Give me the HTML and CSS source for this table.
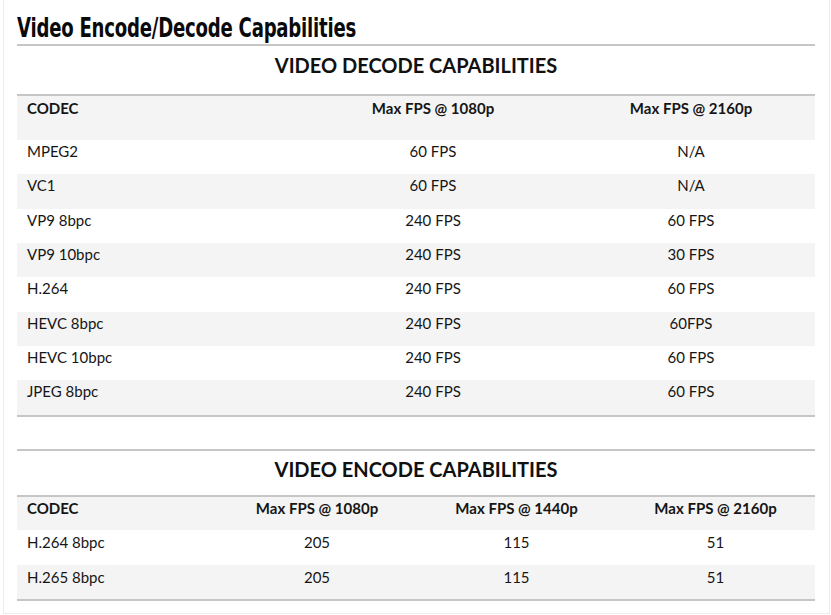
FILE: index.html
```html
<!DOCTYPE html>
<html>
<head>
<meta charset="utf-8">
<link rel="stylesheet" href="styles.css">
</head>
<body>
<div class="frame">
  <h1 class="title"><span class="title-text">Video Encode/Decode Capabilities</span></h1>
  <div class="rule"></div>

  <h2 class="heading heading-decode">VIDEO DECODE CAPABILITIES</h2>
  <table class="grid decode">
    <colgroup><col class="c1"><col class="c2"><col class="c3"></colgroup>
    <thead>
      <tr class="head"><th class="codec">CODEC</th><th>Max FPS @ 1080p</th><th>Max FPS @ 2160p</th></tr>
    </thead>
    <tbody>
      <tr><td class="codec">MPEG2</td><td>60 FPS</td><td>N/A</td></tr>
      <tr class="alt"><td class="codec">VC1</td><td>60 FPS</td><td>N/A</td></tr>
      <tr><td class="codec">VP9 8bpc</td><td>240 FPS</td><td>60 FPS</td></tr>
      <tr class="alt"><td class="codec">VP9 10bpc</td><td>240 FPS</td><td>30 FPS</td></tr>
      <tr><td class="codec">H.264</td><td>240 FPS</td><td>60 FPS</td></tr>
      <tr class="alt"><td class="codec">HEVC 8bpc</td><td>240 FPS</td><td>60FPS</td></tr>
      <tr><td class="codec">HEVC 10bpc</td><td>240 FPS</td><td>60 FPS</td></tr>
      <tr class="alt"><td class="codec">JPEG 8bpc</td><td>240 FPS</td><td>60 FPS</td></tr>
    </tbody>
  </table>

  <h2 class="heading heading-encode">VIDEO ENCODE CAPABILITIES</h2>
  <table class="grid encode">
    <colgroup><col class="e1"><col class="e2"><col class="e3"><col class="e4"></colgroup>
    <thead>
      <tr class="head"><th class="codec">CODEC</th><th>Max FPS @ 1080p</th><th>Max FPS @ 1440p</th><th>Max FPS @ 2160p</th></tr>
    </thead>
    <tbody>
      <tr><td class="codec">H.264 8bpc</td><td>205</td><td>115</td><td>51</td></tr>
      <tr class="alt"><td class="codec">H.265 8bpc</td><td>205</td><td>115</td><td>51</td></tr>
    </tbody>
  </table>
</div>
</body>
</html>
```

FILE: styles.css
```css
html, body {
  margin: 0;
  padding: 0;
  background: #ffffff;
}

.frame {
  box-sizing: border-box;
  width: 827px;
  height: 614px;
  margin-left: 3px;
  padding: 0 14px 0 13px;
  border-left: 1px solid #ececec;
  border-right: 1px solid #ececec;
  border-bottom: 1px solid #ececec;
  color: #161616;
  font-family: Lato, "Open Sans", sans-serif;
}

.title {
  margin: 0;
  padding-top: 13px;
  height: 35px;
  box-sizing: border-box;
  font-family: "DejaVu Sans Condensed", "DejaVu Sans", sans-serif;
  font-stretch: condensed;
  font-weight: 700;
  font-size: 27px;
  line-height: 30px;
  color: #0a0a0a;
  white-space: nowrap;
}

.title-text {
  display: inline-block;
  transform: scaleX(0.745);
  transform-origin: left center;
  letter-spacing: -0.3px;
}

.rule {
  margin-top: 9px;
  height: 0;
  border-top: 2px solid #c6c6c6;
}

.heading {
  margin: 0;
  box-sizing: border-box;
  text-align: center;
  font-weight: 700;
  font-size: 20px;
  line-height: 24px;
  color: #111;
}

.heading-decode {
  height: 48px;
  padding-top: 7px;
}

.heading-encode {
  height: 46px;
  padding-top: 6px;
  border-top: 2px solid #c6c6c6;
  margin-top: 32px;
}

.grid {
  width: 100%;
  border-collapse: separate;
  border-spacing: 0;
  table-layout: fixed;
  border-top: 2px solid #c6c6c6;
  border-bottom: 2px solid #c6c6c6;
  font-size: 15px;
  line-height: 18px;
}

.grid th,
.grid td {
  padding: 0;
  text-align: center;
  vertical-align: top;
  box-sizing: border-box;
}

.grid th {
  font-weight: 700;
}

.grid .codec {
  text-align: left;
  padding-left: 10px;
}

.head,
.alt {
  background: #f4f4f4;
}

.decode .head th {
  height: 44px;
  padding-top: 3px;
}

.decode td {
  height: 34px;
  padding-top: 2px;
}

.decode tbody tr:nth-child(3n+2) td {
  height: 35px;
}

.encode .head th {
  height: 33px;
  padding-top: 2px;
}

.encode td {
  height: 34px;
  padding-top: 3px;
}

.encode tbody tr:first-child td {
  height: 35px;
}

.c1 { width: 282px; }
.c2 { width: 268px; }
.c3 { width: 248px; }

.e1 { width: 200px; }
.e2 { width: 200px; }
.e3 { width: 199px; }
.e4 { width: 199px; }
```
